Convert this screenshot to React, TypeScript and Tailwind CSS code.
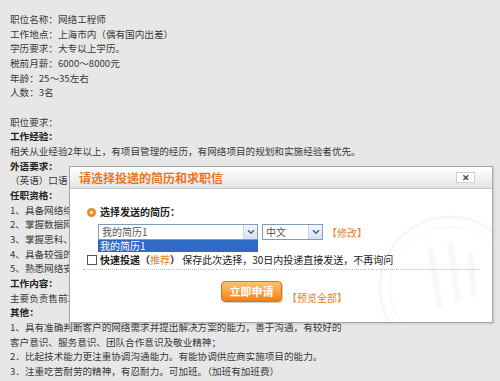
const FONT = '"Noto Sans CJK SC", "Noto Sans", sans-serif';

type Line = { t: string; b?: boolean };

const lines: Line[] = [
  { t: '职位名称：网络工程师' },
  { t: '工作地点：上海市内（偶有国内出差）' },
  { t: '学历要求：大专以上学历。' },
  { t: '税前月薪：6000～8000元' },
  { t: '年龄：25～35左右' },
  { t: '人数：3名' },
  { t: '\u00a0' },
  { t: '职位要求：' },
  { t: '工作经验：', b: true },
  { t: '相关从业经验2年以上，有项目管理的经历，有网络项目的规划和实施经验者优先。' },
  { t: '外语要求：', b: true },
  { t: '（英语）口语' },
  { t: '任职资格：', b: true },
  { t: '1、具备网络综合' },
  { t: '2、掌握数据网络' },
  { t: '3、掌握思科、华' },
  { t: '4、具备较强的学' },
  { t: '5、熟悉网络安全' },
  { t: '工作内容：', b: true },
  { t: '主要负责售前工作' },
  { t: '其他：', b: true },
  { t: '1、具有准确判断客户的网络需求并提出解决方案的能力，善于沟通，有较好的' },
  { t: '客户意识、服务意识、团队合作意识及敬业精神；' },
  { t: '2．比起技术能力更注重协调沟通能力。有能协调供应商实施项目的能力。' },
  { t: '3．注重吃苦耐劳的精神，有忍耐力。可加班。（加班有加班费）' },
];

function Chevron() {
  return (
    <svg width="8" height="6" viewBox="0 0 8 6">
      <path d="M1 1.2 L4 4.2 L7 1.2" fill="none" stroke="#4d6185" strokeWidth="1.6" />
    </svg>
  );
}

function Select({ text, w }: { text: string; w: number }) {
  return (
    <div
      className="relative flex items-center h-[16px] border border-[#7f9db9] bg-white"
      style={{ width: w }}
    >
      <span className="flex-1 pl-[3px] text-[10px] leading-[14px] text-[#555] whitespace-nowrap">{text}</span>
      <div className="flex items-center justify-center w-[14px] h-[14px] bg-gradient-to-b from-[#f4f7fd] to-[#d6e1f5] border-l border-[#c3d3f0]">
        <Chevron />
      </div>
    </div>
  );
}

export default function App() {
  return (
    <div
      className="relative w-[500px] h-[381px] overflow-hidden bg-[#e7e7e7]"
      style={{ fontFamily: FONT }}
    >
      <div className="pl-[10px] pt-[12px] text-[9.6px] leading-[14.67px] text-[#3a3a3a]">
        {lines.map((l, i) => (
          <div key={i} className={`whitespace-nowrap ${l.b ? 'font-bold text-[#222]' : ''}`}>
            {l.t}
          </div>
        ))}
      </div>

      <div className="absolute left-[69px] top-[166px] w-[424px] h-[157px] border border-[#a8a8a8] bg-white overflow-hidden shadow-[1px_1px_2px_rgba(0,0,0,0.15)]">
        <svg className="absolute left-[300px] top-[40px]" width="160" height="160" viewBox="0 0 160 160">
          <circle cx="80" cy="80" r="70" fill="none" stroke="#f7f7f7" strokeWidth="3" />
          <circle cx="80" cy="80" r="60" fill="none" stroke="#f9f9f9" strokeWidth="1.5" />
          <path d="M60 40 L70 100 M80 35 L88 95 M100 45 L104 90" stroke="#f8f8f8" strokeWidth="6" fill="none" />
        </svg>

        <div className="relative flex items-center justify-between h-[22px] pl-[9px] pr-[17px] bg-gradient-to-b from-[#ffffff] to-[#e4e4e4] border-b border-[#c6c6c6]">
          <span className="text-[12px] font-bold text-[#e8761f] leading-none whitespace-nowrap">请选择投递的简历和求职信</span>
          <div className="flex items-center justify-center w-[19px] h-[11px] bg-white border border-[#cfcfcf] text-[9px] leading-none text-[#444] font-bold">
            ✕
          </div>
        </div>

        <div className="relative pl-[17px] pt-[17px]">
          <div className="flex items-center h-[12px] gap-[4px]">
            <div className="flex items-center justify-center w-[9px] h-[9px] rounded-full bg-[#f08a2a]">
              <div className="w-[3px] h-[3px] rounded-full bg-white" />
            </div>
            <span className="text-[10px] font-bold text-[#222] leading-none whitespace-nowrap">选择发送的简历：</span>
          </div>

          <div className="flex items-center mt-[6px] ml-[11px] gap-[4px]">
            <div className="relative">
              <Select text="我的简历1" w={160} />
              <div className="absolute left-0 top-[16px] w-[160px] h-[12px] bg-[#316ac5] text-white text-[10px] leading-[12px] pl-[2px] whitespace-nowrap">
                我的简历1
              </div>
            </div>
            <Select text="中文" w={61} />
            <span className="text-[10px] text-[#e8821e] whitespace-nowrap">【修改】</span>
          </div>

          <div className="flex items-center mt-[14px] h-[12px] gap-[3px]">
            <div className="w-[10px] h-[10px] border border-[#555] bg-white" />
            <span className="text-[10px] leading-none text-[#222] whitespace-nowrap">
              <b>快速投递（</b>
              <span className="text-[#e8821e]">推荐</span>
              <b>）</b> 保存此次选择，30日内投递直接发送，不再询问
            </span>
          </div>

          <div className="mt-[3px] ml-[-4px] mr-[13px] border-t border-dotted border-[#bdbdbd]" />

          <div className="flex items-end mt-[11px] ml-[134px] gap-[5px]">
            <div className="flex items-center justify-center w-[61px] h-[21px] rounded-[4px] border border-[#d9730a] bg-gradient-to-b from-[#ffc46a] to-[#f07f10] shadow-[1px_1px_1px_rgba(0,0,0,0.2)] text-white text-[11px] font-bold whitespace-nowrap">
              立即申请
            </div>
            <span className="text-[10px] text-[#e8821e] leading-[14px] mb-[-3px] whitespace-nowrap">【预览全部】</span>
          </div>
        </div>
      </div>
    </div>
  );
}
